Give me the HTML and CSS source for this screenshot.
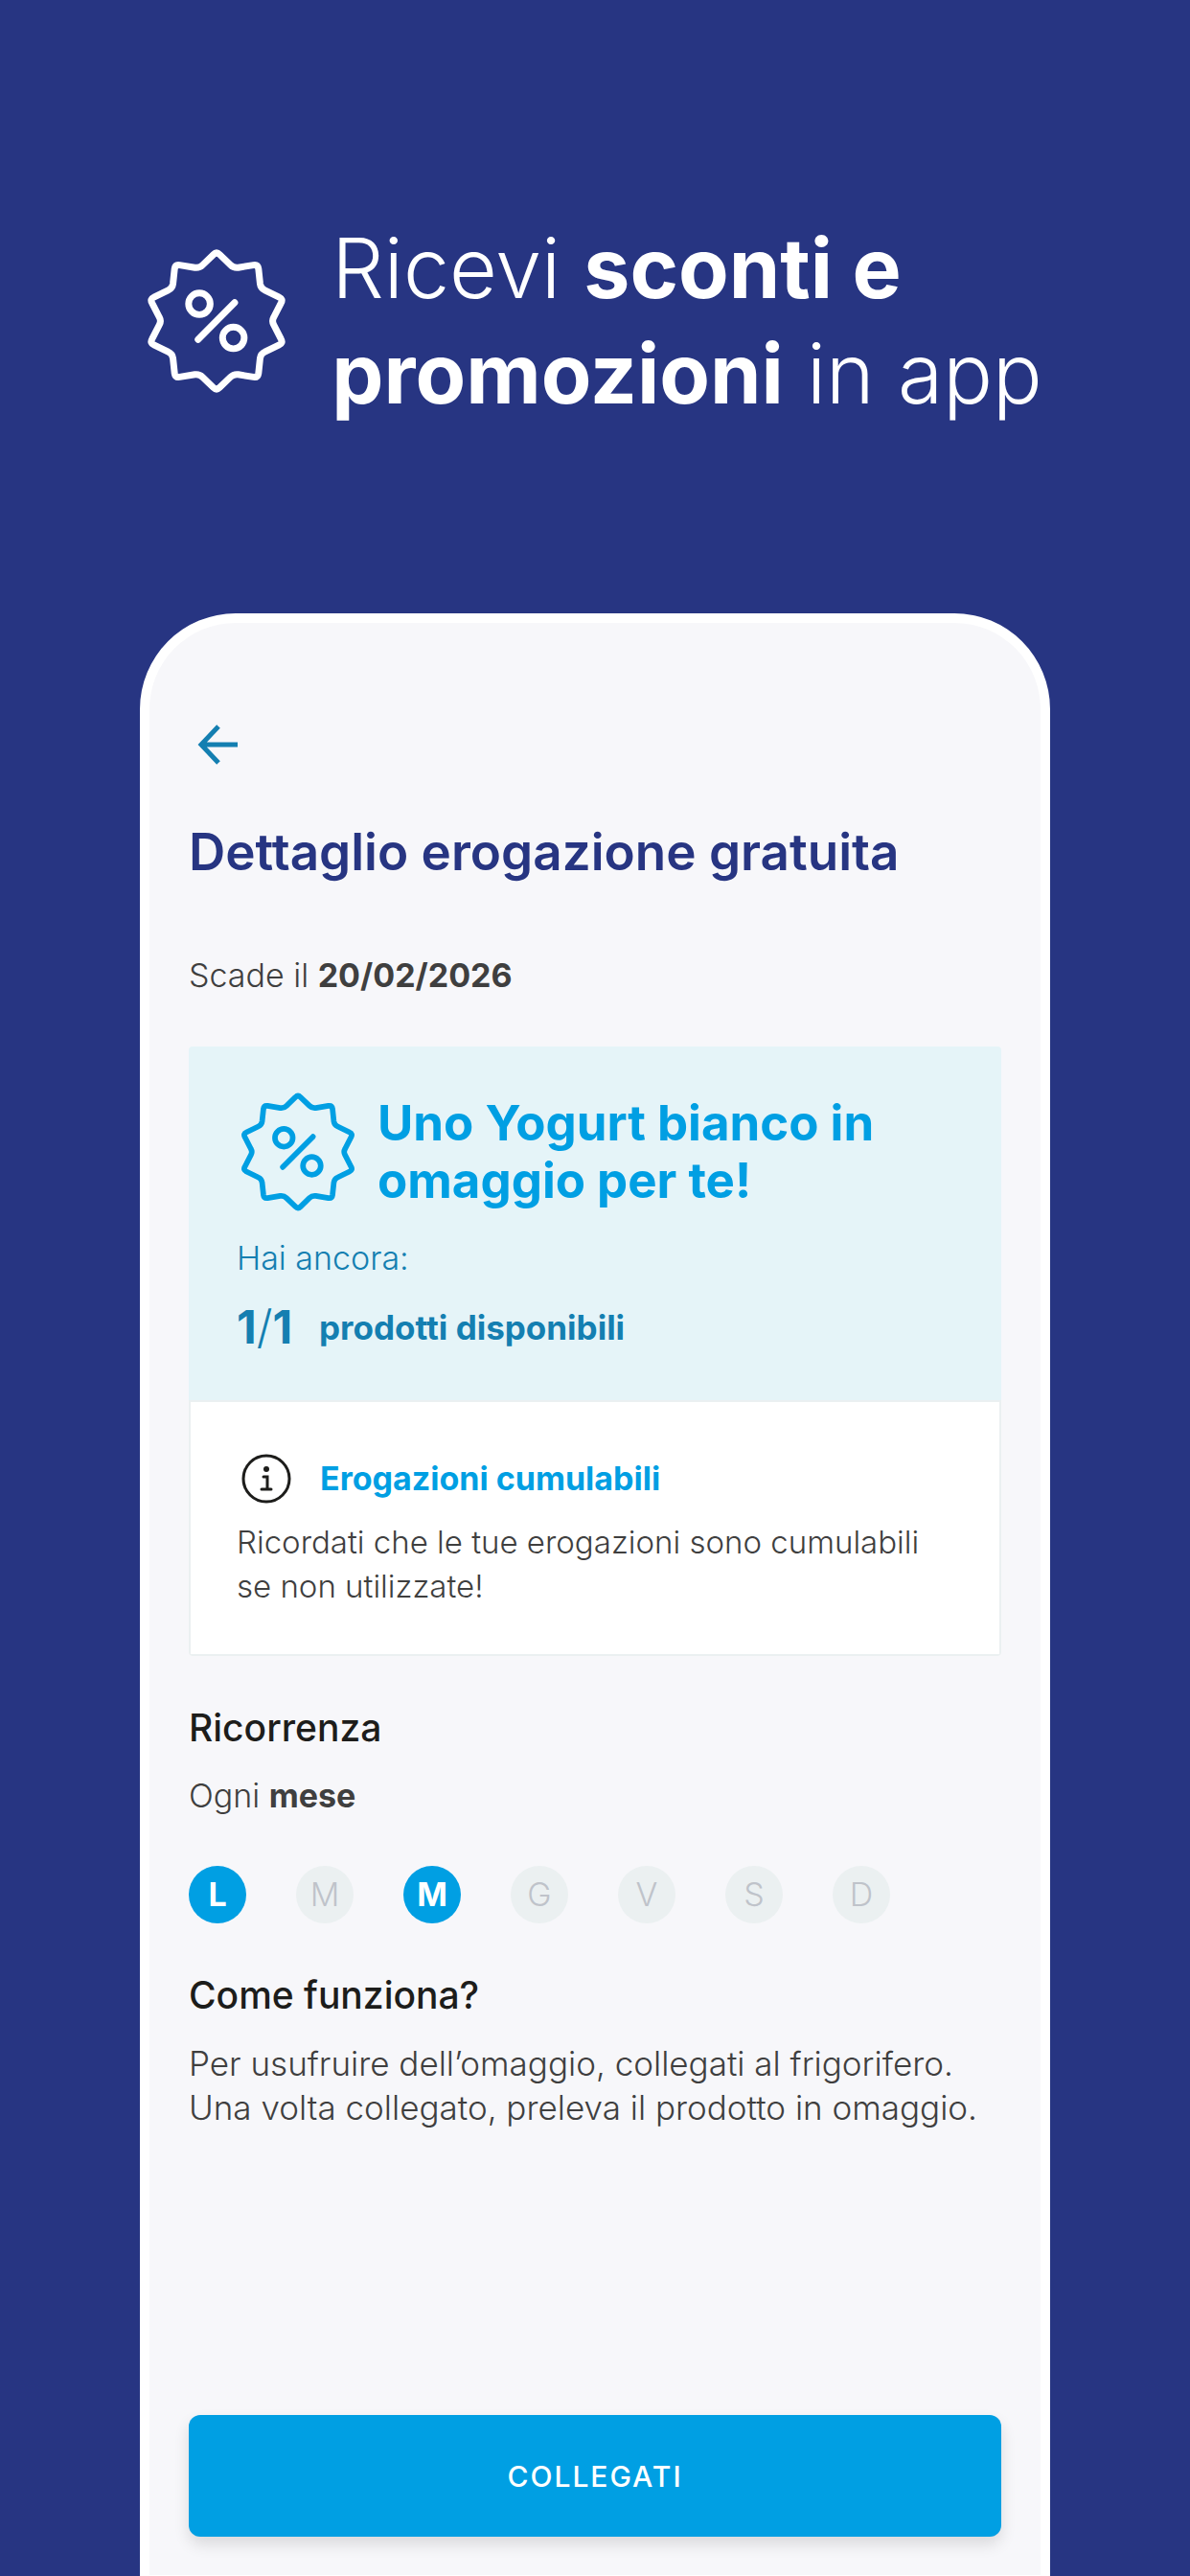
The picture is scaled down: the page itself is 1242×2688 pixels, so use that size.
FILE: index.html
```html
<!DOCTYPE html>
<html lang="it">
<head>
  <meta charset="UTF-8" />
  <meta name="viewport" content="width=device-width, initial-scale=1" />
  <title>Dettaglio erogazione gratuita</title>
  <link rel="stylesheet" href="styles.css">
</head>
<body>
  <!-- Badge sconto, usato due volte -->
  <svg class="sprite" aria-hidden="true">
    <symbol id="badge" viewBox="-216 -226 432 452">
      <g fill="none" stroke="currentColor" stroke-width="21" stroke-linecap="round" stroke-linejoin="round">
        <path d="M-10-209Q0-219 10-209L44-176Q54-166 68-168L116-176Q130-178 132-164L137-117Q139-103 152-97L197-75Q210-69 203-57L180-12Q173 0 180 12L203 57Q210 69 197 75L152 97Q139 103 137 117L132 164Q130 178 116 176L68 168Q54 166 44 176L10 209Q0 219-10 209L-44 176Q-54 166-68 168L-116 176Q-130 178-132 164L-137 117Q-139 103-152 97L-197 75Q-210 69-203 57L-180 12Q-173 0-180-12L-203-57Q-210-69-197-75L-152-97Q-139-103-137-117L-132-164Q-130-178-116-176L-68-168Q-54-166-44-176Z" />
        <circle cx="-54" cy="-54" r="34" />
        <circle cx="53" cy="53" r="34" />
        <path d="M57-58L-58 58" />
      </g>
    </symbol>
  </svg>

  <header class="hero">
    <svg class="hero-badge" aria-hidden="true"><use href="#badge" /></svg>
    <h1>Ricevi <b>sconti e<br>promozioni</b> in app</h1>
  </header>

  <main class="phone">
    <button class="back" aria-label="Indietro">
      <svg viewBox="0 0 42 42" aria-hidden="true">
        <path d="M22 2L4 21L22 40M4 21H42" />
      </svg>
    </button>

    <h2 class="title">Dettaglio erogazione gratuita</h2>
    <p class="text expiry">Scade il <b>20/02/2026</b></p>

    <section class="card">
      <div class="offer">
        <div class="offer-head">
          <svg class="offer-badge" aria-hidden="true"><use href="#badge" /></svg>
          <h3>Uno Yogurt bianco in<br>omaggio per te!</h3>
        </div>
        <p class="text">Hai ancora:</p>
        <p class="count"><span class="count-num">1<i>/</i>1</span> <b>prodotti disponibili</b></p>
      </div>
      <div class="note">
        <div class="note-head">
          <svg viewBox="0 0 52 52" aria-hidden="true">
            <circle cx="26" cy="26" r="24" />
            <path d="M23 24H27V37M21 37H31" />
            <circle class="dot" cx="26" cy="16" r="3" />
          </svg>
          <h4>Erogazioni cumulabili</h4>
        </div>
        <p class="text">Ricordati che le tue erogazioni sono cumulabili<br>se non utilizzate!</p>
      </div>
    </section>

    <h3 class="subtitle">Ricorrenza</h3>
    <p class="text">Ogni <b>mese</b></p>
    <ul class="days">
      <li class="on">L</li>
      <li>M</li>
      <li class="on">M</li>
      <li>G</li>
      <li>V</li>
      <li>S</li>
      <li>D</li>
    </ul>

    <h3 class="subtitle">Come funziona?</h3>
    <p class="text how">Per usufruire dell’omaggio, collegati al frigorifero.<br>Una volta collegato, preleva il prodotto in omaggio.</p>

    <button class="btn-connect">COLLEGATI</button>
  </main>
</body>
</html>
```
FILE: styles.css
```css
* {
  box-sizing: border-box;
}

body {
  margin: 0;
  min-height: 100vh;
  display: flex;
  flex-direction: column;
  background: #273582;
  font-family: Inter, "Liberation Sans", sans-serif;
  color: #3f3f3f;
}

h1, h2, h3, h4, p, ul {
  margin: 0;
  padding: 0;
}

button {
  border: none;
  font-family: inherit;
  cursor: pointer;
}

.sprite {
  position: absolute;
  width: 0;
  height: 0;
}

/* Titolo in alto */
.hero {
  display: flex;
  justify-content: center;
  align-items: center;
  gap: 48px;
  padding: 225px 0 195px;
  color: #fff;
}
.hero-badge {
  flex-shrink: 0;
  width: 144px;
  height: 150px;
}
.hero h1 {
  font-size: 86px;
  line-height: 110px;
  font-weight: 300;
}
.hero b {
  font-weight: 700;
}

/* Telefono */
.phone {
  flex: 1;
  display: flex;
  flex-direction: column;
  width: calc(100% - 292px);
  margin: 0 auto;
  padding: 101px 41px 40px;
  background: #f7f7fa;
  border: 10px solid #fff;
  border-bottom-width: 1px;
  border-radius: 100px 100px 0 0;
}
.back {
  align-self: flex-start;
  padding: 5px 9px;
  background: none;
}
.back svg {
  display: block;
  width: 42px;
  height: 42px;
  fill: none;
  stroke: #147fb1;
  stroke-width: 5;
}
.title {
  margin-top: 50px;
  font-size: 53px;
  line-height: 72px;
  font-weight: 600;
  color: #273582;
}
.text {
  font-size: 34px;
  line-height: 46px;
  font-weight: 300;
}
.text b {
  font-weight: 700;
}
.expiry {
  margin-top: 70px;
}

/* Card omaggio */
.card {
  margin-top: 51px;
  border-radius: 4px;
  overflow: hidden;
}
.offer {
  padding: 48px 50px;
  background: #e5f4f8;
  color: #147fb1;
}
.offer-head {
  display: flex;
  align-items: center;
  gap: 24px;
  padding-left: 5px;
  margin-bottom: 26px;
  color: #009fe3;
}
.offer-badge {
  flex-shrink: 0;
  width: 118px;
  height: 124px;
}
.offer h3 {
  font-size: 51px;
  line-height: 60px;
  font-weight: 700;
}
.count {
  display: flex;
  align-items: center;
  margin-top: 21px;
  font-size: 35px;
  line-height: 56px;
}
.count-num {
  width: 86px;
  font-size: 48px;
  font-weight: 700;
}
.count-num i {
  font-style: normal;
  font-weight: 300;
}
.note {
  padding: 54px 48px 48px;
  background: #fff;
  border: 2px solid #ebf0f1;
}
.note-head {
  display: flex;
  align-items: center;
  gap: 30px;
  padding-left: 5px;
  margin-bottom: 17px;
}
.note-head svg {
  width: 52px;
  height: 52px;
  fill: none;
  stroke: #1d1d1b;
  stroke-width: 3;
  stroke-linecap: round;
}
.note-head .dot {
  fill: #1d1d1b;
  stroke: none;
}
.note h4 {
  font-size: 34px;
  line-height: 46px;
  font-weight: 700;
  color: #009fe3;
}
.note .text {
  font-size: 33px;
}

/* Ricorrenza */
.subtitle {
  margin: 49px 0 22px;
  font-size: 39px;
  line-height: 52px;
  font-weight: 500;
  color: #1d1d1b;
}
.days {
  display: flex;
  gap: 52px;
  margin-top: 50px;
  list-style: none;
}
.days li {
  width: 60px;
  height: 60px;
  border-radius: 50%;
  background: #ebf0f1;
  color: #bfc3ca;
  font-size: 34px;
  line-height: 60px;
  font-weight: 300;
  text-align: center;
}
.days .on {
  background: #009fe3;
  color: #fff;
  font-weight: 700;
}

.how {
  font-size: 35px;
}

.btn-connect {
  margin-top: auto;
  height: 127px;
  border-radius: 12px;
  background: #009fe3;
  box-shadow: 0 8px 16px rgba(0, 0, 0, 0.12);
  color: #fff;
  font-size: 30px;
  font-weight: 500;
  letter-spacing: 2px;
}
```
